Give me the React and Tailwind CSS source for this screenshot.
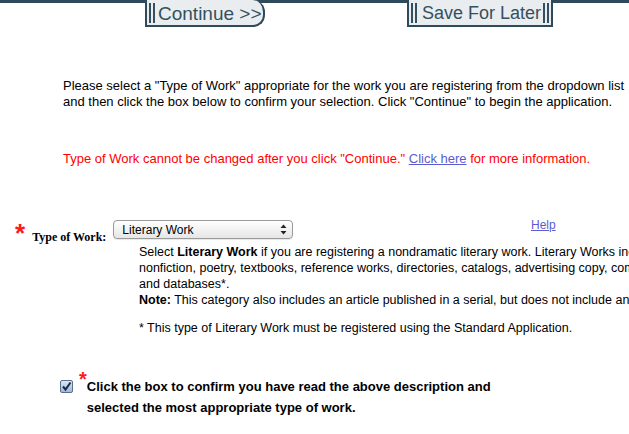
export default function App() {
  const arial = { fontFamily: '"Liberation Sans", Arial, sans-serif' };
  return (
    <div className="relative w-[629px] h-[434px] overflow-hidden bg-white text-black" style={arial}>
      <div className="h-[3px] w-full bg-[#2f4b5b]" />
      <div className="absolute top-0 left-[145px] flex h-[27px] w-[120px] items-center whitespace-nowrap rounded-r-[12px] border-2 border-t-0 border-[#2f4b5b] bg-[#e9edef] text-[19px] leading-none text-[#34505f]">
        <span className="ml-[2px] flex h-[20px] gap-[2px]"><span className="w-[2px] bg-[#34505f]" /><span className="w-[2px] bg-[#34505f]" /></span>
        <span className="ml-[3px] pt-[1px]">Continue &gt;&gt;</span>
      </div>
      <div className="absolute top-0 left-[407px] flex h-[27px] w-[146px] items-center whitespace-nowrap border-2 border-t-0 border-[#2f4b5b] bg-[#e9edef] text-[18px] leading-none text-[#34505f]">
        <span className="ml-[2px] flex h-[20px] gap-[2px]"><span className="w-[2px] bg-[#34505f]" /><span className="w-[2px] bg-[#34505f]" /></span>
        <span className="ml-[5px] pt-[1px]">Save For Later</span>
        <span className="ml-[2px] flex h-[20px] gap-[2px]"><span className="w-[2px] bg-[#34505f]" /><span className="w-[2px] bg-[#34505f]" /></span>
      </div>

      <div className="pl-[63px] pt-[75px] text-[13px] leading-[16px] whitespace-nowrap">
        Please select a "Type of Work" appropriate for the work you are registering from the dropdown list<br />
        and then click the box below to confirm your selection. Click "Continue" to begin the application.
      </div>

      <div className="pl-[63px] pt-[41px] text-[13px] leading-[16px] whitespace-nowrap text-[#ff0000]">
        Type of Work cannot be changed after you click "Continue." <span className="text-[#5b5bd0] underline">Click here</span> for more information.
      </div>

      <div className="relative mt-[53px] flex items-start">
        <span className="ml-[15px] text-[26px] leading-[16px] font-bold text-[#ff1a1a] pt-[5px]">*</span>
        <span className="ml-[7px] pt-[10px] text-[12px] leading-[14px] font-bold" style={{ fontFamily: '"Liberation Serif", "Times New Roman", serif' }}>Type of Work:</span>
        <div className="ml-[7px] flex h-[19px] w-[180px] items-center justify-between rounded-[4px] border border-[#9a9a9a] bg-gradient-to-b from-white to-[#e6e6e6] pl-[8px] pr-[5px] text-[12px] leading-none shadow-[0_1px_1px_rgba(0,0,0,0.1)]">
          <span>Literary Work</span>
          <svg width="7" height="11" viewBox="0 0 7 11"><path d="M3.5 0.5 L6.5 4 L0.5 4 Z" fill="#222" /><path d="M3.5 10.5 L6.5 7 L0.5 7 Z" fill="#222" /></svg>
        </div>
        <span className="absolute left-[531px] top-[-4px] text-[12px] text-[#5b5bd0] underline">Help</span>
      </div>

      <div className="pl-[139px] text-[12.5px] leading-[16px] whitespace-nowrap">
        <div>
          Select <b>Literary Work</b> if you are registering a nondramatic literary work. Literary Works include fiction,<br />
          nonfiction, poetry, textbooks, reference works, directories, catalogs, advertising copy, compilations of information,<br />
          and databases*.<br />
          <b>Note:</b> This category also includes an article published in a serial, but does not include an entire serial issue.
        </div>
        <div className="mt-[12px]">* This type of Literary Work must be registered using the Standard Application.</div>
      </div>

      <div className="mt-[35px] flex items-start pl-[60px]">
        <div className="mt-[9px] flex h-[13px] w-[13px] items-center justify-center rounded-[2px] border border-[#5c6f8a] bg-gradient-to-b from-[#dbe6f5] to-[#9fb8dc]">
          <svg width="11" height="11" viewBox="0 0 11 11"><path d="M2 5.5 L4.5 8.5 L9.5 1.5" stroke="#1b2a40" strokeWidth="2" fill="none" /></svg>
        </div>
        <span className="ml-[6px] text-[20px] leading-[16px] font-bold text-[#ff1a1a]">*</span>
        <div className="pt-[5px] text-[13px] leading-[21px] font-bold whitespace-nowrap">
          Click the box to confirm you have read the above description and<br />
          selected the most appropriate type of work.
        </div>
      </div>
    </div>
  );
}
